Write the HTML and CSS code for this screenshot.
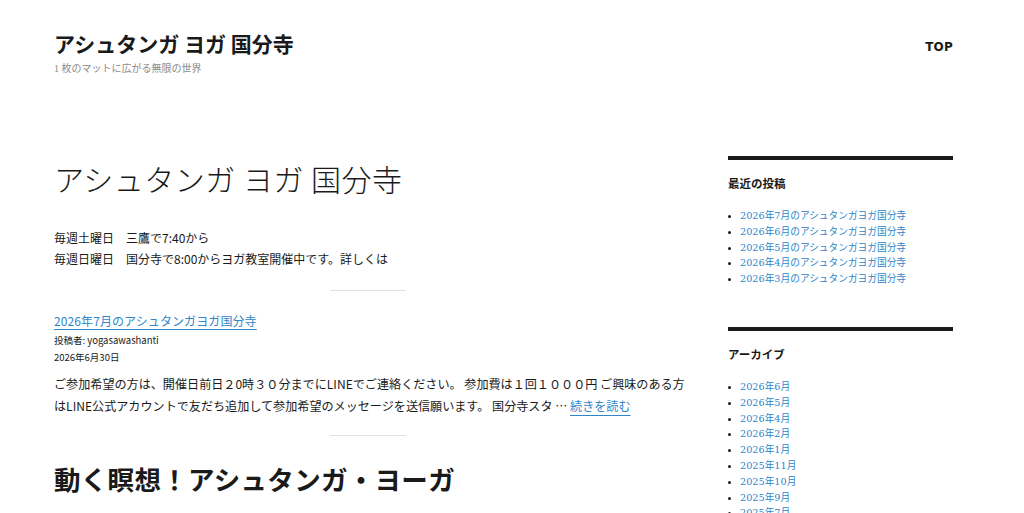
FILE: index.html
```html
<!DOCTYPE html>
<html lang="ja">
<head>
  <meta charset="utf-8">
  <title>アシュタンガ ヨガ 国分寺</title>
  <link rel="stylesheet" href="styles.css">
</head>
<body>
  <div class="site">
    <header class="site_header">
      <div class="branding">
        <p class="site_title"><a href="#">アシュタンガ ヨガ 国分寺</a></p>
        <p class="site_description">1 枚のマットに広がる無限の世界</p>
      </div>
      <nav class="main_nav"><a href="#">TOP</a></nav>
    </header>

    <div class="site_content">
      <main class="content_area">
        <section class="page_intro">
          <h1 class="page_title">アシュタンガ ヨガ 国分寺</h1>
          <p>毎週土曜日　三鷹で7:40から<br>毎週日曜日　国分寺で8:00からヨガ教室開催中です。詳しくは</p>
        </section>

        <article class="post">
          <h2 class="entry_title"><a href="#">2026年7月のアシュタンガヨガ国分寺</a></h2>
          <div class="entry_meta">
            <span>投稿者: yogasawashanti</span>
            <span>2026年6月30日</span>
          </div>
          <p class="entry_summary">ご参加希望の方は、開催日前日２0時３０分までにLINEでご連絡ください。 参加費は１回１０００円 ご興味のある方はLINE公式アカウントで友だち追加して参加希望のメッセージを送信願います。 国分寺スタ … <a href="#" class="more_link">続きを読む</a></p>
        </article>

        <article class="post post_next">
          <h2 class="big_title">動く瞑想！アシュタンガ・ヨーガ</h2>
        </article>
      </main>

      <aside class="sidebar">
        <section class="widget">
          <h2 class="widget_title">最近の投稿</h2>
          <ul>
            <li><a href="#">2026年7月のアシュタンガヨガ国分寺</a></li>
            <li><a href="#">2026年6月のアシュタンガヨガ国分寺</a></li>
            <li><a href="#">2026年5月のアシュタンガヨガ国分寺</a></li>
            <li><a href="#">2026年4月のアシュタンガヨガ国分寺</a></li>
            <li><a href="#">2026年3月のアシュタンガヨガ国分寺</a></li>
          </ul>
        </section>
        <section class="widget">
          <h2 class="widget_title">アーカイブ</h2>
          <ul>
            <li><a href="#">2026年6月</a></li>
            <li><a href="#">2026年5月</a></li>
            <li><a href="#">2026年4月</a></li>
            <li><a href="#">2026年2月</a></li>
            <li><a href="#">2026年1月</a></li>
            <li><a href="#">2025年11月</a></li>
            <li><a href="#">2025年10月</a></li>
            <li><a href="#">2025年9月</a></li>
            <li><a href="#">2025年7月</a></li>
          </ul>
        </section>
      </aside>
    </div>
  </div>
</body>
</html>
```

FILE: styles.css
```css
body {
  margin: 0;
  background: #fff;
  color: #1a1a1a;
  font-family: "Noto Sans CJK JP", "Noto Sans", sans-serif;
}
a { color: #2e86c9; }
p { margin: 0; }

.site { padding: 0 71px 0 54px; }

/* header */
.site_header {
  display: flex;
  justify-content: space-between;
  align-items: flex-start;
  padding-top: 28px;
}
.site_title {
  font-size: 21px;
  font-weight: 700;
  line-height: 30px;
}
.site_title a { color: #1a1a1a; text-decoration: none; }
.site_description {
  margin-top: 4px;
  font-family: "Liberation Serif", "Noto Sans CJK JP", serif;
  font-size: 10px;
  color: #8a8a8a;
  line-height: 14px;
}
.main_nav { padding-top: 4px; }
.main_nav a {
  color: #1a1a1a;
  text-decoration: none;
  font-family: "DejaVu Sans", sans-serif;
  font-weight: 700;
  font-size: 12px;
  letter-spacing: 0.2px;
}

/* content + sidebar */
.site_content {
  display: flex;
  gap: 34px;
  margin-top: 80px;
}
.content_area { width: 640px; flex: none; }
.sidebar { flex: 1; }

.page_intro p {
  font-size: 12px;
  line-height: 21px;
}
.page_title {
  margin: 0 0 27px;
  font-size: 30px;
  font-weight: 300;
  line-height: 44px;
  letter-spacing: 0.5px;
}

.post {
  position: relative;
  margin-top: 21px;
  padding-top: 20px;
}
.post::before {
  content: "";
  position: absolute;
  top: 0;
  left: 276px;
  width: 76px;
  height: 1px;
  background: #e2e2e2;
}
.post_next { margin-top: 18px; }
.entry_title {
  margin: 0;
  font-size: 12px;
  font-weight: 400;
  line-height: 22px;
  letter-spacing: 0.1px;
}
.entry_title a { text-underline-offset: 3px; }
.entry_meta {
  display: flex;
  flex-direction: column;
  margin-top: 0;
  font-size: 9.5px;
  line-height: 17px;
  color: #1a1a1a;
}
.entry_summary {
  margin-top: 7px;
  font-size: 12.1px;
  line-height: 22px;
}
.more_link { text-underline-offset: 4px; }

.big_title {
  margin: 6px 0 0;
  font-size: 26.5px;
  font-weight: 700;
  line-height: 36px;
  letter-spacing: 0.3px;
}

/* widgets */
.widget {
  border-top: 4px solid #1a1a1a;
  padding-top: 15px;
  margin-bottom: 40px;
}
.widget_title {
  margin: 0 0 17px;
  font-size: 11.5px;
  font-weight: 700;
  line-height: 16px;
}
.widget ul {
  margin: 0;
  padding-left: 12px;
  font-family: "DejaVu Serif", "Noto Sans CJK JP", serif;
  font-size: 9.7px;
  line-height: 15.8px;
}
.widget li::marker { color: #1a1a1a; font-size: 9px; }
.widget a { text-decoration: none; }
```
